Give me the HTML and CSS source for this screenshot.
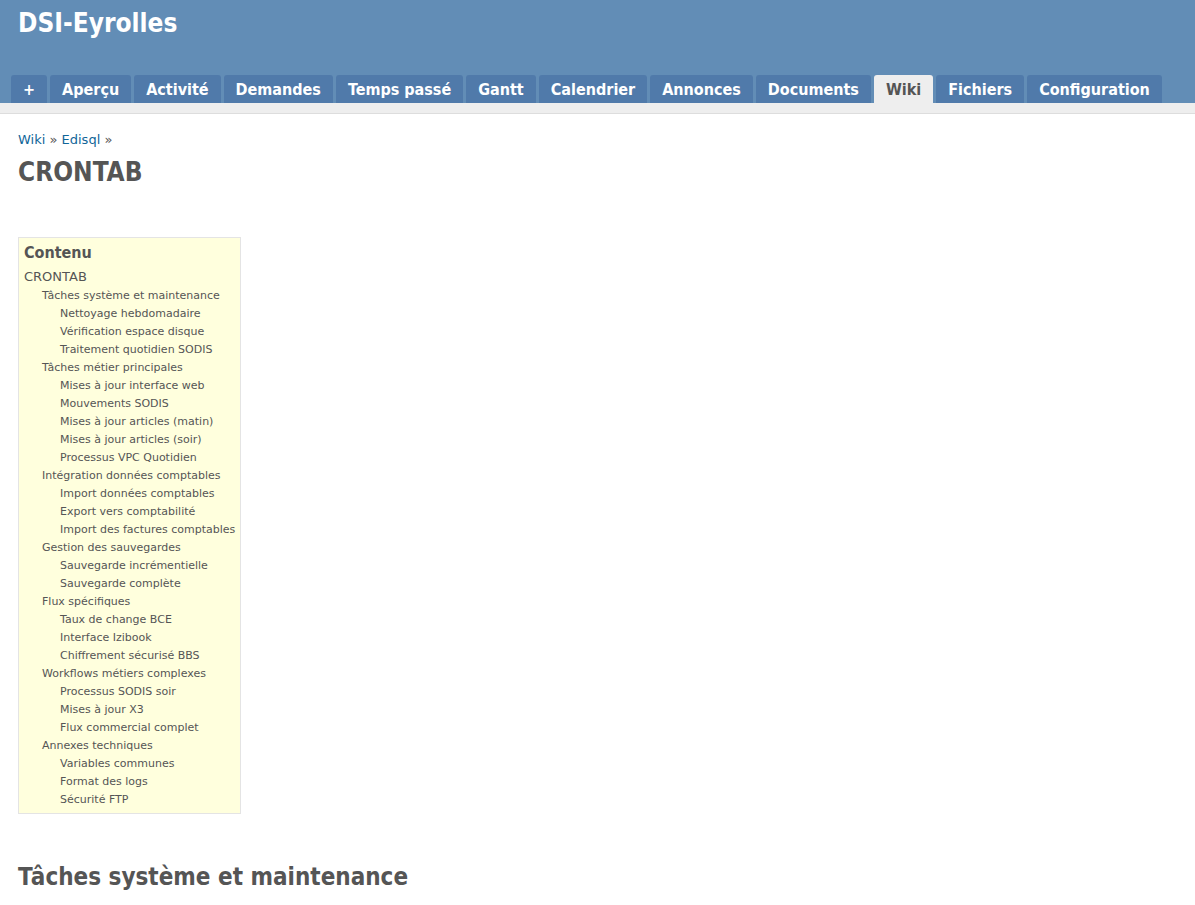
FILE: index.html
```html
<!DOCTYPE html>
<html lang="fr">
<head>
<meta charset="utf-8">
<title>CRONTAB - Wiki - DSI-Eyrolles</title>
<link rel="stylesheet" href="styles.css">
</head>
<body>
<div class="header">
  <h1 class="site-title">DSI-Eyrolles</h1>
  <ul class="main-menu">
    <li><a class="tab" href="#">+</a></li>
    <li><a class="tab" href="#">Aperçu</a></li>
    <li><a class="tab" href="#">Activité</a></li>
    <li><a class="tab" href="#">Demandes</a></li>
    <li><a class="tab" href="#">Temps passé</a></li>
    <li><a class="tab" href="#">Gantt</a></li>
    <li><a class="tab" href="#">Calendrier</a></li>
    <li><a class="tab" href="#">Annonces</a></li>
    <li><a class="tab" href="#">Documents</a></li>
    <li><a class="tab selected" href="#">Wiki</a></li>
    <li><a class="tab" href="#">Fichiers</a></li>
    <li><a class="tab" href="#">Configuration</a></li>
  </ul>
</div>
<div class="main">
  <div class="content">
    <p class="breadcrumb"><a href="#">Wiki</a> » <a href="#">Edisql</a> »</p>
    <h2 class="page-title">CRONTAB</h2>
    <ul class="toc">
      <li class="toc-title">Contenu</li>
      <li class="lvl1"><a href="#">CRONTAB</a>
        <ul>
          <li><a href="#">Tâches système et maintenance</a>
            <ul>
              <li><a href="#">Nettoyage hebdomadaire</a></li>
              <li><a href="#">Vérification espace disque</a></li>
              <li><a href="#">Traitement quotidien SODIS</a></li>
            </ul>
          </li>
          <li><a href="#">Tâches métier principales</a>
            <ul>
              <li><a href="#">Mises à jour interface web</a></li>
              <li><a href="#">Mouvements SODIS</a></li>
              <li><a href="#">Mises à jour articles (matin)</a></li>
              <li><a href="#">Mises à jour articles (soir)</a></li>
              <li><a href="#">Processus VPC Quotidien</a></li>
            </ul>
          </li>
          <li><a href="#">Intégration données comptables</a>
            <ul>
              <li><a href="#">Import données comptables</a></li>
              <li><a href="#">Export vers comptabilité</a></li>
              <li><a href="#">Import des factures comptables</a></li>
            </ul>
          </li>
          <li><a href="#">Gestion des sauvegardes</a>
            <ul>
              <li><a href="#">Sauvegarde incrémentielle</a></li>
              <li><a href="#">Sauvegarde complète</a></li>
            </ul>
          </li>
          <li><a href="#">Flux spécifiques</a>
            <ul>
              <li><a href="#">Taux de change BCE</a></li>
              <li><a href="#">Interface Izibook</a></li>
              <li><a href="#">Chiffrement sécurisé BBS</a></li>
            </ul>
          </li>
          <li><a href="#">Workflows métiers complexes</a>
            <ul>
              <li><a href="#">Processus SODIS soir</a></li>
              <li><a href="#">Mises à jour X3</a></li>
              <li><a href="#">Flux commercial complet</a></li>
            </ul>
          </li>
          <li><a href="#">Annexes techniques</a>
            <ul>
              <li><a href="#">Variables communes</a></li>
              <li><a href="#">Format des logs</a></li>
              <li><a href="#">Sécurité FTP</a></li>
            </ul>
          </li>
        </ul>
      </li>
    </ul>
    <h2 class="section-title">Tâches système et maintenance</h2>
  </div>
</div>
</body>
</html>
```

FILE: styles.css
```css
html, body {
  margin: 0;
  padding: 0;
}
body {
  font-family: "DejaVu Sans Condensed", "DejaVu Sans", sans-serif;
  color: #333;
  background: #fff;
}
a { text-decoration: none; }

.header {
  background: #628db6;
  height: 103px;
  display: flex;
  flex-direction: column;
  justify-content: space-between;
}
.site-title {
  margin: 0;
  padding: 6px 0 0 18px;
  font-size: 26px;
  line-height: 34px;
  font-weight: bold;
  color: #fff;
}
.main-menu {
  list-style: none;
  margin: 0;
  padding: 0 0 0 11px;
  display: flex;
  gap: 3px;
}
.tab {
  display: block;
  height: 28px;
  line-height: 29px;
  padding: 0 12px;
  background: #507aaa;
  color: #fff;
  font-weight: bold;
  font-size: 16px;
  border-radius: 3px 3px 0 0;
}
.tab.selected {
  background: #eeeeee;
  color: #555;
}

.main {
  background: #eeeeee;
  padding-top: 10px;
}
.content {
  background: #fff;
  border-top: 1px solid #dddddd;
  padding: 17px 18px 20px 18px;
  min-height: 780px;
}
.breadcrumb {
  margin: 0;
  font-family: "DejaVu Sans", sans-serif;
  font-size: 13px;
  line-height: 18px;
  color: #555;
}
.breadcrumb a { color: #169; }

.page-title {
  margin: 6px 0 0 0;
  font-size: 26px;
  line-height: 34px;
  color: #555;
  font-weight: bold;
}

.toc {
  list-style: none;
  margin: 48px 0 0 0;
  padding: 4px 5px 4px 5px;
  background: #ffffdd;
  border: 1px solid #e4e4e4;
  display: inline-block;
  font-family: "DejaVu Sans", sans-serif;
  font-size: 11px;
}
.toc ul {
  list-style: none;
  margin: 0;
  padding: 0 0 0 18px;
}
.toc li {
  line-height: 18px;
}
.toc a { color: #555; }
.toc-title {
  font-family: "DejaVu Sans Condensed", "DejaVu Sans", sans-serif;
  font-weight: bold;
  font-size: 16px;
  line-height: 22px !important;
  color: #555;
  margin-bottom: 4px;
}
.lvl1 > a {
  font-size: 13px;
}

.section-title {
  margin: 46px 0 0 0;
  font-size: 24px;
  line-height: 34px;
  color: #555;
  font-weight: bold;
}
```
